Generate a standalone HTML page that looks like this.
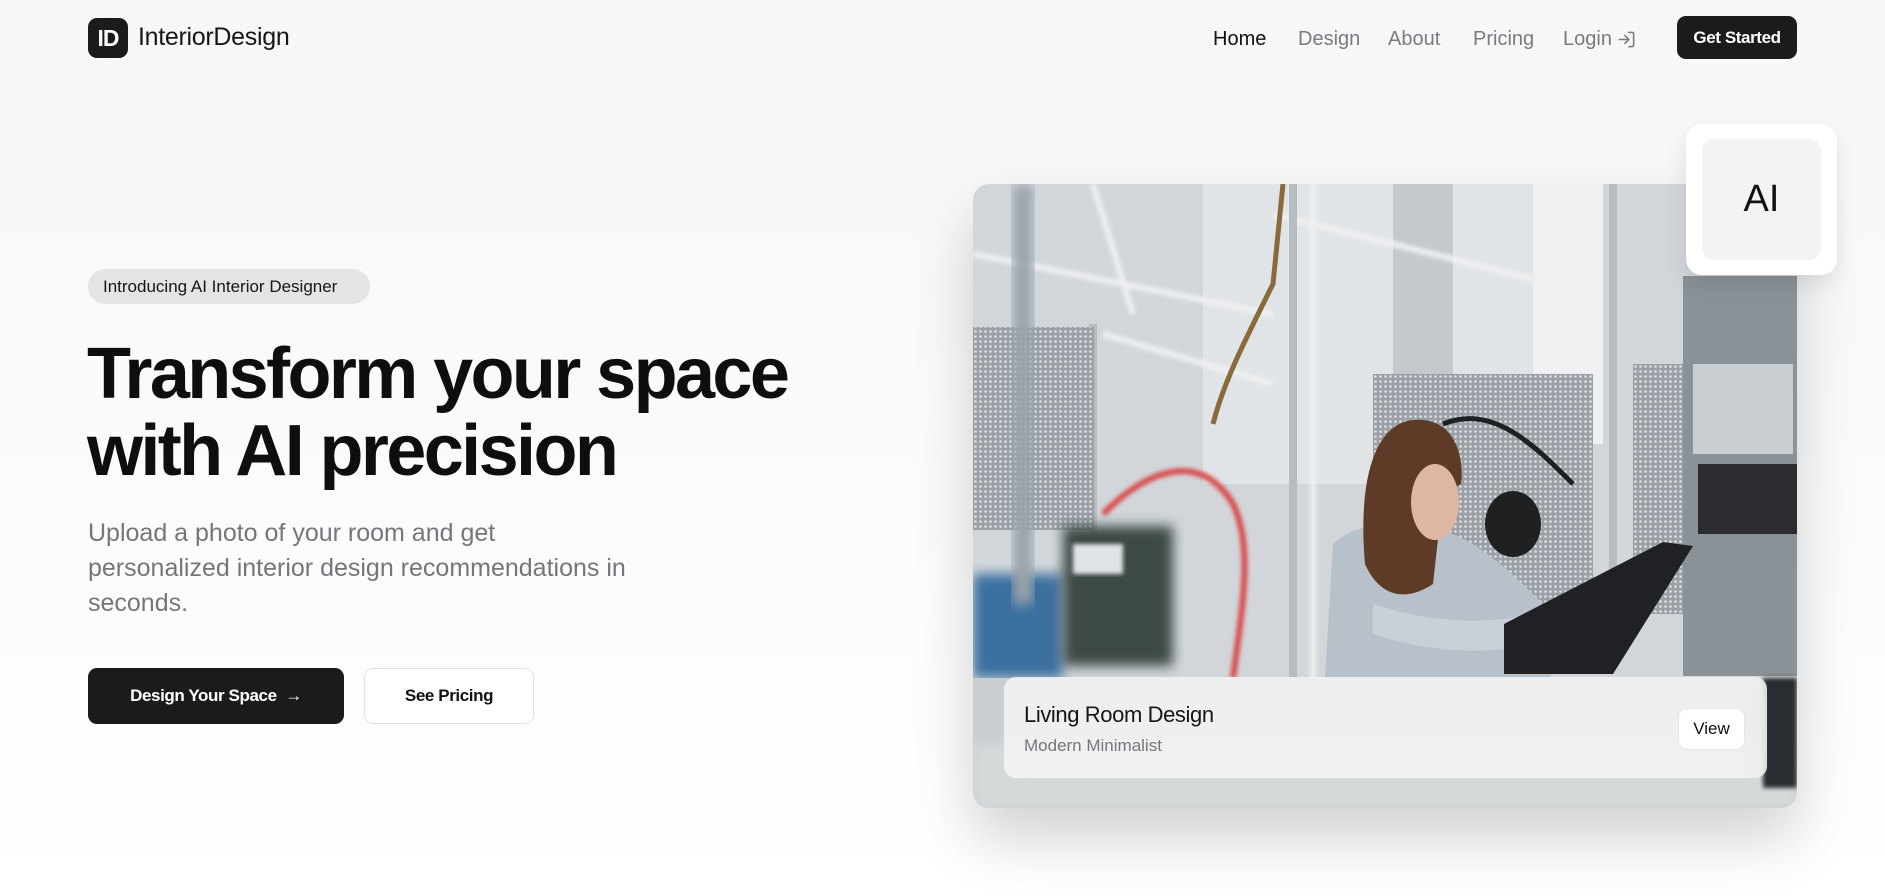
<!DOCTYPE html>
<html><head><meta charset="utf-8">
<style>
*{margin:0;padding:0;box-sizing:border-box}
html,body{width:1885px;height:896px;overflow:hidden}
body{font-family:"Liberation Sans",sans-serif;background:linear-gradient(#f7f7f7 0,#f9f9f9 300px,#ffffff 896px);position:relative;color:#111}
.abs{position:absolute}
.logo{left:88px;top:18px;width:40px;height:40px;background:#1b1b1c;border-radius:9px;color:#fff;font-size:23px;font-weight:bold;line-height:40px;text-align:center;letter-spacing:-1px}
.brand{left:138px;top:23px;font-size:25px;color:#161616;letter-spacing:-0.3px}
.nav{top:28px;font-size:20px;color:#777b80}
.gs{left:1677px;top:16px;width:120px;height:43px;background:#1b1b1c;border-radius:9px;color:#fff;font-weight:bold;font-size:17px;line-height:43px;text-align:center;letter-spacing:-0.4px}
.badge{left:88px;top:269px;width:282px;height:35px;border-radius:18px;background:#e4e4e5;font-size:17px;line-height:35px;padding-left:15px;color:#151515}
h1{position:absolute;left:87px;top:336px;font-size:72px;line-height:77px;font-weight:bold;letter-spacing:-2.6px;color:#0e0e0f}
.p{left:88px;top:516px;white-space:nowrap;font-size:25px;line-height:35px;color:#73767b}
.b1{left:88px;top:668px;width:256px;height:56px;background:#1b1b1c;border-radius:9px;color:#fff;font-size:17px;font-weight:bold;line-height:56px;text-align:center;letter-spacing:-0.4px}
.b2{left:364px;top:668px;width:170px;height:56px;background:#fff;border:1px solid #e2e2e4;border-radius:9px;font-size:17px;font-weight:bold;line-height:54px;text-align:center;letter-spacing:-0.4px}
.card{left:973px;top:184px;width:824px;height:624px;border-radius:16px;overflow:hidden;box-shadow:0 30px 60px rgba(0,0,0,0.18)}
.ov{left:1004px;top:677px;width:763px;height:101px;border-radius:12px;background:rgba(245,246,247,0.82);backdrop-filter:blur(14px)}
.ai{left:1686px;top:124px;width:151px;height:151px;background:#fff;border-radius:16px;box-shadow:0 8px 24px rgba(0,0,0,0.1)}
.ai div{position:absolute;left:16px;top:15px;width:119px;height:121px;border-radius:12px;background:#f3f3f4;text-align:center;line-height:121px;font-size:38px;color:#111}
</style></head><body>
<div class="abs logo">ID</div>
<div class="abs brand">InteriorDesign</div>
<div class="abs nav" style="left:1213px;color:#111">Home</div>
<div class="abs nav" style="left:1298px">Design</div>
<div class="abs nav" style="left:1388px">About</div>
<div class="abs nav" style="left:1473px">Pricing</div>
<div class="abs nav" style="left:1563px">Login</div>
<svg class="abs" style="left:1617px;top:30px" width="19" height="19" viewBox="0 0 24 24" fill="none" stroke="#777b80" stroke-width="2" stroke-linecap="round" stroke-linejoin="round"><path d="M15 3h4a2 2 0 0 1 2 2v14a2 2 0 0 1-2 2h-4"/><path d="M10 17l5-5-5-5"/><path d="M15 12H3"/></svg>
<div class="abs gs">Get Started</div>

<div class="abs badge">Introducing AI Interior Designer</div>
<h1>Transform your space<br>with AI precision</h1>
<div class="abs p">Upload a photo of your room and get<br>personalized interior design recommendations in<br>seconds.</div>
<div class="abs b1">Design Your Space &nbsp;<span style="font-weight:normal">→</span></div>
<div class="abs b2">See Pricing</div>

<div class="abs card">
<svg width="824" height="624" viewBox="0 0 824 624" preserveAspectRatio="none">
<defs><filter id="bl"><feGaussianBlur stdDeviation="6"/></filter><filter id="b2"><feGaussianBlur stdDeviation="2"/></filter>
<pattern id="dots" width="5" height="5" patternUnits="userSpaceOnUse"><rect width="5" height="5" fill="#9aa0a6"/><circle cx="2.5" cy="2.5" r="1.3" fill="#dfe2e5"/></pattern></defs>
<rect width="824" height="624" fill="#d2d6da"/>
<rect x="230" y="0" width="360" height="300" fill="#e1e4e7"/>
<rect x="420" y="0" width="60" height="200" fill="#c4c9cd"/>
<rect x="560" y="0" width="70" height="260" fill="#eef0f2"/>
<g stroke="#eef0f2" stroke-width="6" filter="url(#b2)"><path d="M0 70 L300 130"/><path d="M300 30 L620 110"/><path d="M340 0 L340 500"/><path d="M120 0 L160 130"/><path d="M130 150 L300 200"/></g>
<g stroke="#b6bcc1" stroke-width="8"><path d="M320 0V500"/><path d="M640 0V450"/><path d="M120 140V360"/></g>
<rect x="0" y="143" width="121" height="203" fill="url(#dots)"/>
<rect x="400" y="190" width="220" height="236" fill="url(#dots)"/>
<rect x="660" y="180" width="60" height="250" fill="url(#dots)"/>
<rect x="710" y="92" width="114" height="400" fill="#8a9197"/>
<rect x="720" y="180" width="100" height="90" fill="#c9ced2"/>
<rect x="725" y="280" width="99" height="70" fill="#2a2c30"/>
<path d="M240 240 C250 200 270 160 300 100 L310 0" stroke="#8a6a3a" stroke-width="5" fill="none"/>
<path d="M130 330 C180 280 230 270 260 320 C280 360 270 420 260 494" stroke="#d84848" stroke-width="6" fill="none" filter="url(#b2)"/>
<ellipse cx="540" cy="340" rx="28" ry="33" fill="#1e2022"/>
<path d="M470 240 C520 220 560 260 600 300" stroke="#1e2022" stroke-width="5" fill="none"/>
<path d="M352 494 L360 360 C380 340 420 335 460 345 C500 350 540 390 570 420 L578 494Z" fill="#b8c1ca"/>
<path d="M400 420 C460 440 520 440 560 430 L565 460 C520 470 460 470 400 450Z" fill="#c9d0d7"/>
<path d="M392 380 C385 300 400 240 440 236 C480 232 492 270 488 300 L470 310 L460 400 C430 420 405 410 392 380Z" fill="#5e3b26"/>
<ellipse cx="462" cy="318" rx="24" ry="38" fill="#dfb6a3"/>
<path d="M531 440 L690 358 L720 362 L640 490 L531 490Z" fill="#1f2124"/>
<rect x="0" y="390" width="90" height="104" fill="#3a6fa0" filter="url(#bl)"/>
<rect x="90" y="342" width="110" height="140" fill="#3c4a44" filter="url(#bl)"/>
<rect x="100" y="360" width="50" height="30" fill="#e0e3e6" filter="url(#b2)"/>
<rect x="40" y="0" width="20" height="420" fill="#9aa3aa" filter="url(#bl)"/>
<rect x="0" y="494" width="824" height="130" fill="#c9ced1"/>
<rect x="0" y="560" width="824" height="64" fill="#d4d9da" filter="url(#bl)"/>
<rect x="790" y="494" width="34" height="110" fill="#2c2e30" filter="url(#b2)"/>
</svg>
</div>
<div class="abs ov">
<div class="abs" style="left:20px;top:25px;font-size:22px;color:#151515;letter-spacing:-0.4px">Living Room Design</div>
<div class="abs" style="left:20px;top:59px;font-size:17px;color:#74777c">Modern Minimalist</div>
<div class="abs" style="left:674px;top:31px;width:67px;height:42px;background:#fff;border-radius:9px;border:1px solid #e6e6e6;font-size:17px;line-height:40px;text-align:center">View</div>
</div>
<div class="abs ai"><div>AI</div></div>
</body></html>
